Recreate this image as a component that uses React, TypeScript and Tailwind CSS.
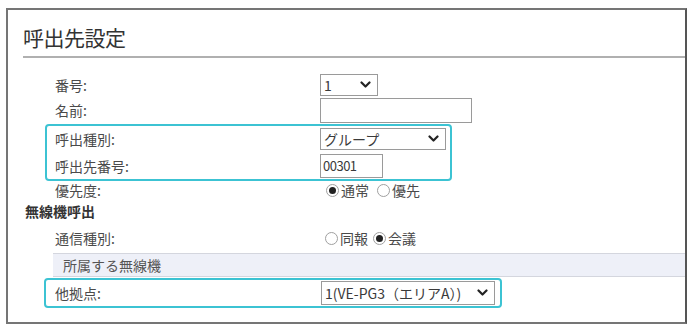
import React from "react";

const font = { fontFamily: '"Noto Sans CJK JP", "Noto Sans", sans-serif' };

function Chevron() {
  return (
    <svg width="11" height="8" viewBox="0 0 11 8" className="shrink-0">
      <polyline points="1.5,1.5 5.5,5.5 9.5,1.5" fill="none" stroke="#222" strokeWidth="2.2" strokeLinecap="round" strokeLinejoin="round" />
    </svg>
  );
}

function Select({ value, w, h = 22 }: { value: string; w: string; h?: number }) {
  return (
    <div
      className={`flex items-center justify-between border border-[#9a9a9a] bg-white pl-[3px] pr-[6px] text-[14px] leading-none text-[#3a3a3a] ${w}`}
      style={{ height: h }}
    >
      <span className="whitespace-nowrap">{value}</span>
      <Chevron />
    </div>
  );
}

function Radio({ checked, label }: { checked: boolean; label: string }) {
  return (
    <span className="flex items-center gap-[2px]">
      <span className="flex h-[13px] w-[13px] items-center justify-center rounded-full border border-[#a0a0a0] bg-white">
        {checked && <span className="h-[7px] w-[7px] rounded-full bg-[#222]" />}
      </span>
      <span className="text-[14px] text-[#4a4a4a]">{label}</span>
    </span>
  );
}

function Label({ children }: { children: React.ReactNode }) {
  return <div className="w-[265px] shrink-0 text-[14px] leading-none text-[#4a4a4a]">{children}</div>;
}

export default function App() {
  return (
    <div className="relative h-[326px] w-[689px] overflow-hidden bg-white" style={font}>
      <div className="ml-[6px] mt-[8px] flex h-[316px] w-[681px] flex-col border-2 border-[#757575] border-r-[#555]">
        {/* Title */}
        <div className="ml-[15px] border-b-2 border-[#b0b0b0] pb-[5px] pt-[13px]">
          <div className="text-[21px] leading-[28px] tracking-[-0.5px] text-[#333]">呼出先設定</div>
        </div>

        <div className="mt-[16px] flex flex-col">
          {/* 番号 */}
          <div className="flex h-[22px] items-center pl-[47px]">
            <Label>番号:</Label>
            <Select value="1" w="w-[58px]" />
          </div>
          {/* 名前 */}
          <div className="flex h-[28px] items-center pl-[47px]">
            <Label>名前:</Label>
            <div className="h-[25px] w-[152px] border border-[#9a9a9a] bg-white" />
          </div>

          {/* highlighted group 1 */}
          <div className="ml-[37px] flex h-[57px] w-[407px] flex-col justify-center rounded-[4px] border-2 border-[#3cc3d3]">
            <div className="flex h-[26px] items-center pl-[8px]">
              <Label>呼出種別:</Label>
              <Select value="グループ" w="w-[126px]" />
            </div>
            <div className="flex h-[27px] items-center pl-[8px]">
              <Label>呼出先番号:</Label>
              <div className="flex h-[24px] w-[63px] items-center border border-[#9a9a9a] bg-white pl-[2px] text-[13px] tracking-[-0.5px] text-[#3a3a3a]">
                00301
              </div>
            </div>
          </div>

          {/* 優先度 */}
          <div className="flex h-[18px] items-center pl-[47px]">
            <Label>優先度:</Label>
            <div className="flex items-center gap-[8px] pl-[6px]">
              <Radio checked label="通常" />
              <Radio checked={false} label="優先" />
            </div>
          </div>

          {/* 無線機呼出 */}
          <div className="flex h-[24px] items-center pl-[17px] text-[14px] font-bold leading-none text-[#333]">
            無線機呼出
          </div>

          {/* 通信種別 */}
          <div className="flex h-[30px] items-center pl-[47px]">
            <Label>通信種別:</Label>
            <div className="flex items-center gap-[5px] pl-[5px]">
              <Radio checked={false} label="同報" />
              <Radio checked label="会議" />
            </div>
          </div>

          {/* band */}
          <div className="ml-[45px] flex h-[24px] items-center border-y border-[#d4d6de] bg-[#eef0f8] pl-[10px] text-[14px] leading-none text-[#555]">
            所属する無線機
          </div>

          {/* highlighted group 2 */}
          <div className="ml-[36px] mt-[1px] flex h-[30px] w-[458px] items-center rounded-[4px] border-2 border-[#3cc3d3] pl-[9px]">
            <Label>他拠点:</Label>
            <div className="ml-[1px]">
              <Select value="1(VE-PG3（エリアA）)" w="w-[174px]" h={24} />
            </div>
          </div>
        </div>
      </div>
    </div>
  );
}
